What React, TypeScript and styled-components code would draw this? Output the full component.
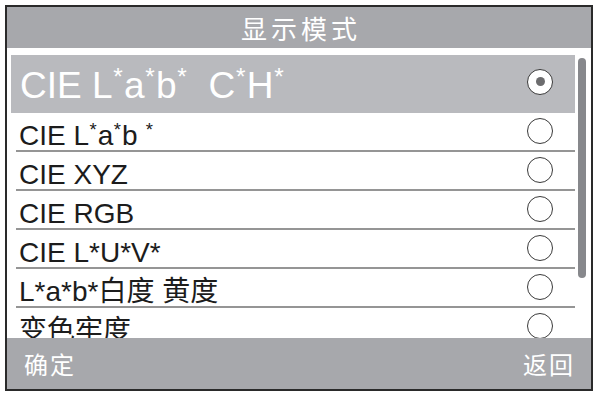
import styled, { createGlobalStyle } from "styled-components";

const GlobalStyle = createGlobalStyle`
  html, body {
    margin: 0;
    padding: 0;
    background: #ffffff;
  }
  body {
    font-family: "Liberation Sans", "Noto Sans CJK SC", sans-serif;
  }
`;

const Screen = styled.div`
  box-sizing: border-box;
  margin: 5px 0 0 5px;
  width: 588px;
  height: 386px;
  border: 2px solid #2a2a2a;
  background: #ffffff;
  display: flex;
  flex-direction: column;
  overflow: hidden;
`;

const Header = styled.div`
  height: 41px;
  flex-shrink: 0;
  background: #a7a8ac;
  color: #ffffff;
  display: flex;
  align-items: center;
  justify-content: center;
  font-family: "Noto Sans CJK SC", sans-serif;
  font-size: 26px;
  letter-spacing: 4px;
  padding-left: 4px;
`;

const Body = styled.div`
  flex: 1;
  min-height: 0;
  display: flex;
  overflow: hidden;
  padding: 7px 0 0 4px;
`;

const List = styled.div`
  width: 564px;
  flex-shrink: 0;
  display: flex;
  flex-direction: column;
`;

const Row = styled.div<{ $active?: boolean }>`
  box-sizing: border-box;
  flex-shrink: 0;
  display: flex;
  align-items: center;
  justify-content: space-between;
  ${(p) =>
    p.$active
      ? `
    height: 58px;
    background: #b9babe;
    color: #ffffff;
    font-size: 37px;
    padding: 0 22px 0 9px;
  `
      : `
    height: 39px;
    margin-left: 5px;
    border-bottom: 2px solid #959595;
    color: #1c1c1c;
    font-size: 28px;
    padding: 0 22px 0 3px;
  `}
`;

const Label = styled.span<{ $active?: boolean }>`
  line-height: 1;
  white-space: pre;
  font-family: "Liberation Sans", "Noto Sans CJK SC", sans-serif;
  margin-top: ${(p) => (p.$active ? "2px" : "9px")};
`;

const Star = styled.span`
  display: inline-block;
  font-size: 0.66em;
  vertical-align: top;
  margin: -0.05em 0.05em 0 0.03em;
`;

const Radio = styled.span<{ $checked?: boolean }>`
  box-sizing: border-box;
  width: 26px;
  height: 26px;
  flex-shrink: 0;
  border-radius: 50%;
  border: 1.5px solid #3a3a3a;
  background: #ffffff;
  display: flex;
  align-items: center;
  justify-content: center;
  margin-top: ${(p) => (p.$checked ? "-5px" : "-2px")};

  &::after {
    content: "";
    width: 9px;
    height: 9px;
    border-radius: 50%;
    background: ${(p) => (p.$checked ? "#6c6c6e" : "transparent")};
  }
`;

const Track = styled.div`
  width: 8px;
  margin: 3px 0 0 3px;
`;

const Thumb = styled.div`
  width: 8px;
  height: 220px;
  border-radius: 4px;
  background: #87888c;
`;

const Footer = styled.div`
  height: 51px;
  flex-shrink: 0;
  background: #a7a8ac;
  color: #ffffff;
  display: flex;
  align-items: center;
  justify-content: space-between;
  padding: 0 16px 0 17px;
  font-family: "Noto Sans CJK SC", sans-serif;
  font-size: 24px;
  letter-spacing: 2px;
`;

const modes = [
  { id: "lab", label: <>CIE L<Star>*</Star>a<Star>*</Star>b <Star>*</Star></> },
  { id: "xyz", label: "CIE XYZ" },
  { id: "rgb", label: "CIE RGB" },
  { id: "luv", label: "CIE L*U*V*" },
  { id: "white", label: "L*a*b*白度 黄度" },
  { id: "fast", label: "变色牢度" },
];

export default function App() {
  return (
    <>
      <GlobalStyle />
      <Screen>
        <Header>显示模式</Header>
        <Body>
          <List>
            <Row $active>
              <Label $active>
                CIE L<Star>*</Star>a<Star>*</Star>b<Star>*</Star>{"  "}C<Star>*</Star>H<Star>*</Star>
              </Label>
              <Radio $checked />
            </Row>
            {modes.map((m) => (
              <Row key={m.id}>
                <Label>{m.label}</Label>
                <Radio />
              </Row>
            ))}
          </List>
          <Track>
            <Thumb />
          </Track>
        </Body>
        <Footer>
          <span>确定</span>
          <span>返回</span>
        </Footer>
      </Screen>
    </>
  );
}
